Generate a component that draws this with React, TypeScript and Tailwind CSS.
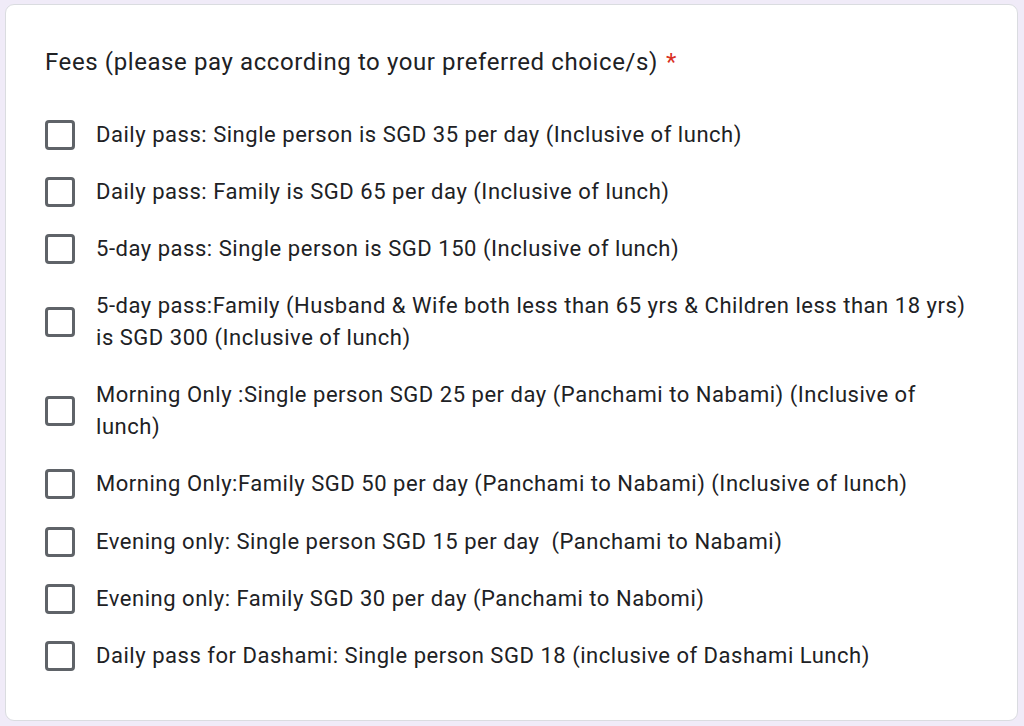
import React from "react";

const options: string[] = [
  "Daily pass: Single person is SGD 35 per day (Inclusive of lunch)",
  "Daily pass: Family is SGD 65 per day (Inclusive of lunch)",
  "5-day pass: Single person is SGD 150 (Inclusive of lunch)",
  "5-day pass:Family (Husband & Wife both less than 65 yrs & Children less than 18 yrs) is SGD 300 (Inclusive of lunch)",
  "Morning Only :Single person SGD 25 per day (Panchami to Nabami) (Inclusive of lunch)",
  "Morning Only:Family SGD 50 per day (Panchami to Nabami) (Inclusive of lunch)",
  "Evening only: Single person SGD 15 per day \u00a0(Panchami to Nabami)",
  "Evening only: Family SGD 30 per day (Panchami to Nabomi)",
  "Daily pass for Dashami: Single person SGD 18 (inclusive of Dashami Lunch)",
];

const App: React.FC = () => {
  return (
    <div className="min-h-[726px] w-[1024px] bg-[#f0ebf8] px-[5px] pt-[4px] pb-[5px] font-['Roboto',sans-serif]">
      <div className="w-[1013px] h-[717px] rounded-[9px] border border-[#dadce0] bg-white pl-[39px] pr-[40px] pt-[41px]">
        <div className="text-[24px] leading-[32px] text-[#202124] tracking-[0.6px]">
          Fees (please pay according to your preferred choice/s)
          <span className="text-[#d93025] ml-[8px]">*</span>
        </div>
        <div className="mt-[41px] flex flex-col gap-[25.1px]">
          {options.map((opt) => (
            <label key={opt} className="flex items-center">
              <span className="w-[30px] h-[30px] shrink-0 rounded-[4px] border-[3px] border-[#5f6368]" />
              <span className="ml-[21px] text-[22px] leading-[32px] tracking-[0.53px] text-[#202124]">{opt}</span>
            </label>
          ))}
        </div>
      </div>
    </div>
  );
};

export default App;
